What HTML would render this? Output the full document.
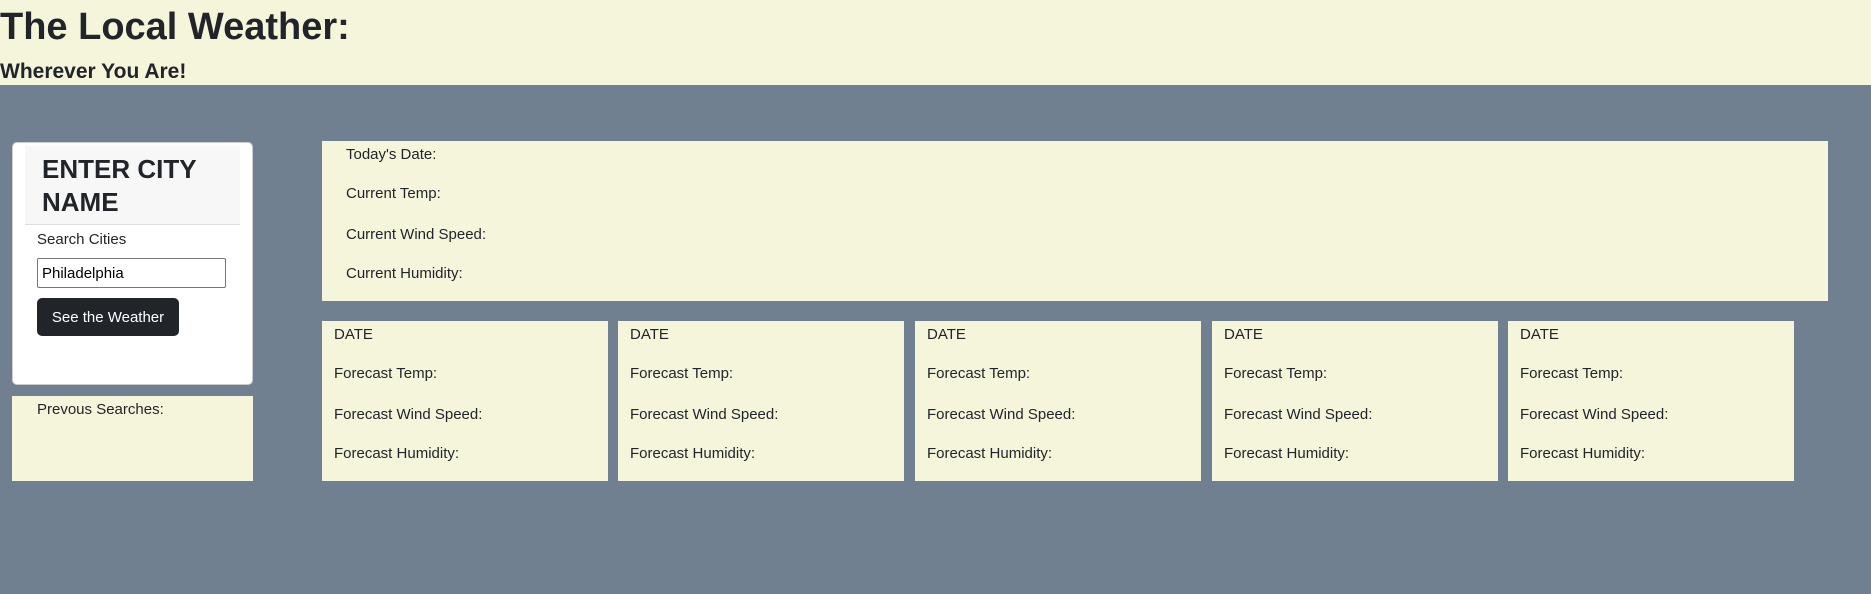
<!DOCTYPE html>
<html><head><style>
*{box-sizing:border-box;margin:0;padding:0}
body{width:1871px;height:594px;background:#708090;font-family:"Liberation Sans",sans-serif;color:#212529;position:relative;overflow:hidden;font-size:15px}
.hdr{position:absolute;left:0;top:0;width:1871px;height:85px;background:#f5f5dc}
.h1{position:absolute;left:0;top:3px;font-size:38px;font-weight:bold;line-height:48px}
.h4{position:absolute;left:0;top:59px;font-size:21px;font-weight:bold;line-height:26px}
.abs{position:absolute}
.card{left:12px;top:142px;width:241px;height:243px;background:#fff;border:1px solid #ccc;border-radius:5px}
.ch{left:25px;top:146px;width:215px;height:79px;background:#f7f7f7;border-bottom:1px solid #ddd;font-size:26px;font-weight:bold;line-height:33px;padding:7px 0 0 17px}
.bx{background:#f5f5dc}
.t{position:absolute;white-space:nowrap;line-height:20px}
input{position:absolute;left:37px;top:258px;width:189px;height:30px;border:1px solid #767676;border-radius:2px;font-family:"Liberation Sans",sans-serif;font-size:15px;padding-left:4px;color:#000;background:#fff}
.btn{left:37px;top:298px;width:142px;height:38px;background:#212529;color:#fff;border-radius:5px;font-size:15px;text-align:center;line-height:39px}
</style></head><body>
<div class="hdr"><div class="h1">The Local Weather:</div><div class="h4">Wherever You Are!</div></div>
<div class="abs card"></div>
<div class="abs ch">ENTER CITY<br>NAME</div>
<div class="t" style="left:37px;top:230px">Search Cities</div>
<input value="Philadelphia">
<div class="abs btn">See the Weather</div>
<div class="abs bx" style="left:12px;top:396px;width:241px;height:85px"></div>
<div class="t" style="left:37px;top:400px">Prevous Searches:</div>
<div class="abs bx" style="left:322px;top:141px;width:1506px;height:160px"></div>
<div class="t" style="left:346px;top:145px">Today's Date:</div>
<div class="t" style="left:346px;top:184px">Current Temp:</div>
<div class="t" style="left:346px;top:225px">Current Wind Speed:</div>
<div class="t" style="left:346px;top:264px">Current Humidity:</div>
<div class="abs bx" style="left:322px;top:321px;width:286px;height:160px"></div>
<div class="abs bx" style="left:618px;top:321px;width:286px;height:160px"></div>
<div class="abs bx" style="left:915px;top:321px;width:286px;height:160px"></div>
<div class="abs bx" style="left:1212px;top:321px;width:286px;height:160px"></div>
<div class="abs bx" style="left:1508px;top:321px;width:286px;height:160px"></div>
<div class="t" style="left:334px;top:325px">DATE</div><div class="t" style="left:334px;top:364px">Forecast Temp:</div><div class="t" style="left:334px;top:405px">Forecast Wind Speed:</div><div class="t" style="left:334px;top:444px">Forecast Humidity:</div>
<div class="t" style="left:630px;top:325px">DATE</div><div class="t" style="left:630px;top:364px">Forecast Temp:</div><div class="t" style="left:630px;top:405px">Forecast Wind Speed:</div><div class="t" style="left:630px;top:444px">Forecast Humidity:</div>
<div class="t" style="left:927px;top:325px">DATE</div><div class="t" style="left:927px;top:364px">Forecast Temp:</div><div class="t" style="left:927px;top:405px">Forecast Wind Speed:</div><div class="t" style="left:927px;top:444px">Forecast Humidity:</div>
<div class="t" style="left:1224px;top:325px">DATE</div><div class="t" style="left:1224px;top:364px">Forecast Temp:</div><div class="t" style="left:1224px;top:405px">Forecast Wind Speed:</div><div class="t" style="left:1224px;top:444px">Forecast Humidity:</div>
<div class="t" style="left:1520px;top:325px">DATE</div><div class="t" style="left:1520px;top:364px">Forecast Temp:</div><div class="t" style="left:1520px;top:405px">Forecast Wind Speed:</div><div class="t" style="left:1520px;top:444px">Forecast Humidity:</div>
</body></html>
